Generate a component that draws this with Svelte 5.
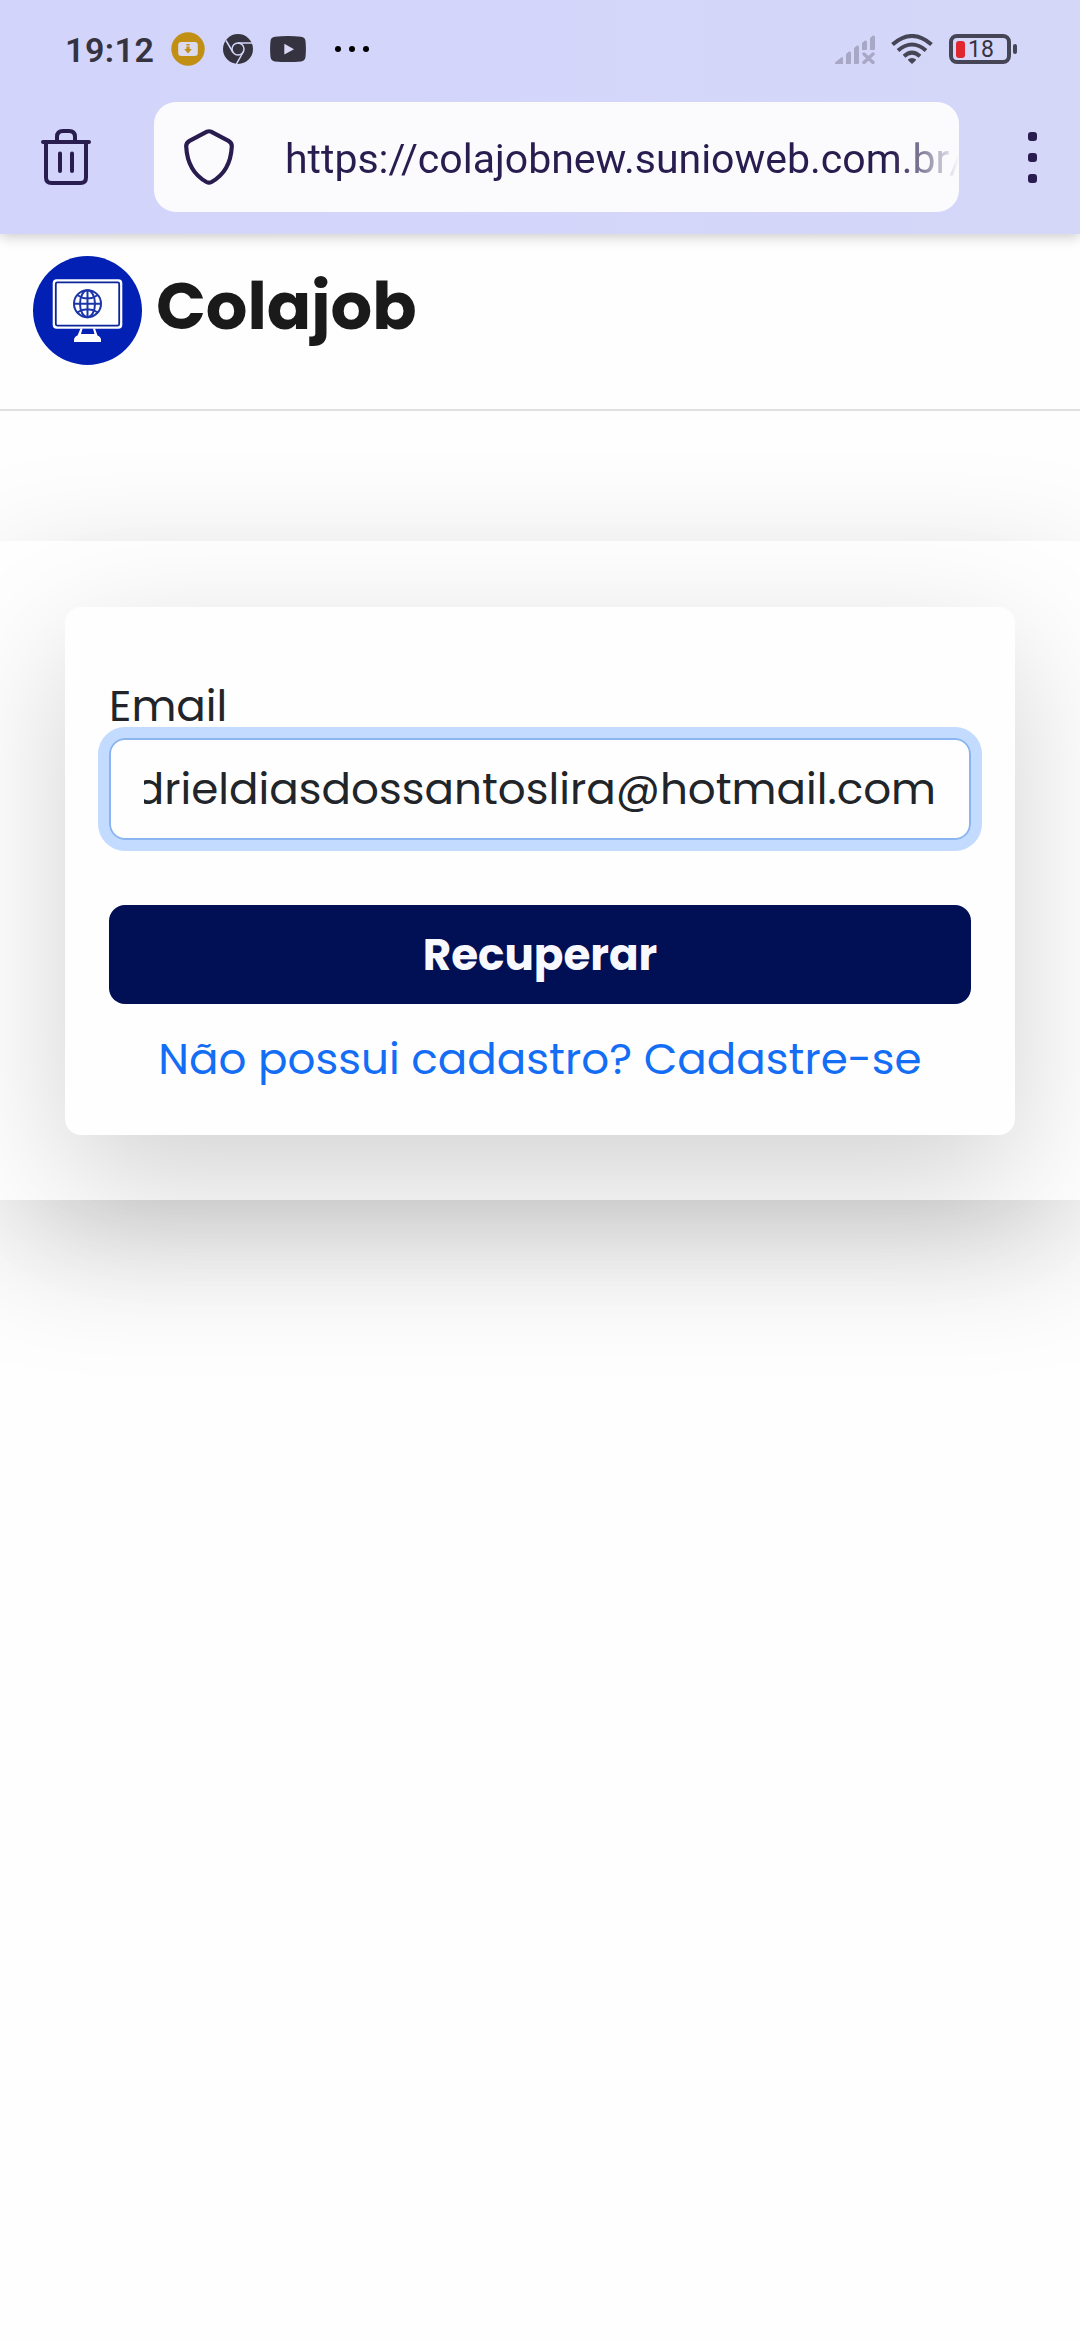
<script>
  const bars = [
    { x: 11, top: 16 },
    { x: 19, top: 10 },
  ];
  const email = 'drieldiasdossantoslira@hotmail.com';
</script>

<div class="screen">
  <div class="chrome">
    <div class="status">
      <div class="status-left">
        <span class="time">19:12</span>
        <svg class="i-dl" width="34" height="34" viewBox="0 0 34 34">
          <circle cx="17" cy="17" r="16.7" fill="#c18f13" />
          <rect x="7.2" y="10" width="19.6" height="14" rx="3" fill="#dcdaf0" />
          <path d="M15.4 12h3.2v1.6h-3.2zM15.4 14.5h3.2v2.5h2.2L17 21.4 13.200 17h2.200z" fill="#c18f13" />
        </svg>
        <svg class="i-chrome" width="30" height="30" viewBox="0 0 30 30">
          <circle cx="15" cy="15" r="15" fill="#34333f" />
          <g fill="none" stroke="#d4d5fa" stroke-width="1.500">
            <circle cx="15" cy="15" r="6" />
            <path d="M15 9H29M9.800 18L3 6.500M20.200 18L13.400 30" />
          </g>
        </svg>
        <svg class="i-yt" width="36" height="26" viewBox="0 0 36 26">
          <path d="M5 .7Q18-.5 31 .7Q35 1 35.500 5Q36.300 13 35.500 21Q35 25 31 25.400Q18 26.500 5 25.400Q1 25 .5 21Q-.3 13 .5 5Q1 1 5 .7Z" fill="#34333f" />
          <path d="M14.300 7.800V18.600L24 13.200Z" fill="#d9d9f6" />
        </svg>
        <svg class="i-dots" width="34" height="6" viewBox="0 0 34 6">
          <circle cx="3" cy="3" r="3" /><circle cx="17" cy="3" r="3" /><circle cx="31" cy="3" r="3" />
        </svg>
      </div>
      <div class="status-right">
        <svg width="40" height="29" viewBox="0 0 40 29" fill="#a8a8c6">
          <path d="M0 29V27.500L6.500 22.200Q8 21.500 8 23.500V29Z" />
          {#each bars as b}
            <path d={`M${b.x} 29V${b.top + 3}L${b.x + 3} ${b.top + .5}Q${b.x + 5} ${b.top} ${b.x + 5} ${b.top + 2}V28Q${b.x + 5} 29 ${b.x + 4} 29Z`} />
          {/each}
          <path d="M27 15V8L30 5.500Q32 5 32 7V14Q32 15 31 15ZM35 15V3L38 .5Q40 0 40 2V14Q40 15 39 15Z" />
          <path d="M29 19L38 27.500M38 19L29 27.500" stroke="#a8a8c6" stroke-width="3.400" stroke-linecap="round" />
        </svg>
        <svg class="i-wifi" width="42" height="30" viewBox="0 0 42 30" fill="none" stroke="#454555" stroke-width="4">
          <path d="M1.500 10.500Q21-6.500 40.500 10.500M7 16.500Q21 4.500 35 16.500M13 22.300Q21 15 29 22.300" />
          <path d="M21 24q2.700 0 4 1.600q.3 1-4 4.400q-4.300-3.400-4-4.400Q18.300 24 21 24z" fill="#454555" stroke="none" />
        </svg>
        <div class="battery">
          <span class="level"></span><span class="pct">18</span>
        </div>
        <span class="nub"></span>
      </div>
    </div>

    <div class="toolbar">
      <svg class="trash" width="50" height="56" viewBox="0 0 50 56" fill="none" stroke="#291d4f" stroke-width="4" stroke-linecap="round">
        <path d="M2 13H48M5 14V48.500Q5 54 10.500 54H39.500Q45 54 45 48.500V14M16 12V8Q16 2 22 2H28Q34 2 34 8V12M19 24.500V42M31 24.500V42" />
      </svg>
      <div class="url">
        <svg width="50" height="56" viewBox="0 0 50 56" fill="none" stroke="#291d4f" stroke-width="4.200" stroke-linejoin="round">
          <path d="M23 2.700Q25 1.800 27 2.700L44.500 11.900Q48 14 47.800 17.500Q46.500 42.500 27.500 53Q25 54.300 22.500 53Q3.500 42.500 2.200 17.500Q2 14 5.500 11.900Z" />
        </svg>
        <span class="address">https://colajobnew.sunioweb.com.br/</span>
      </div>
      <svg class="menu" width="9" height="51" viewBox="0 0 9 51" fill="#291d4f">
        <rect width="9" height="9" rx="3" /><rect y="21" width="9" height="9" rx="3" /><rect y="42" width="9" height="9" rx="3" />
      </svg>
    </div>
  </div>

  <header class="brand">
    <svg class="logo" width="109" height="109" viewBox="0 0 109 109">
      <circle cx="54.500" cy="54.500" r="54.500" fill="#0220b4" />
      <rect x="19.700" y="23.300" width="69.600" height="49.400" rx="4" fill="#fff" />
      <rect x="22.800" y="26.400" width="63.400" height="43.200" rx="1.500" fill="#fff" stroke="#0b2499" stroke-width="1.800" />
      <g fill="none" stroke="#1c35a8" stroke-width="2">
        <circle cx="54.500" cy="47.700" r="13.500" />
        <ellipse cx="54.500" cy="47.700" rx="7.500" ry="13.500" />
        <path d="M54.500 34V61.500M41 47.700H68M44 39Q54.500 46 65 39M44 56.500Q54.500 50 65 56.500" />
      </g>
      <path d="M47.500 72.500H62L64.500 79.500Q68 81 68 84V86H41V84Q41 81 44.500 79.500Z" fill="#fff" />
      <path d="M49.500 72.700H60L61.500 78H48Z" fill="#0220b4" />
    </svg>
    <span class="name">Colajob</span>
  </header>

  <main class="section">
    <form class="card" onsubmit={(e) => e.preventDefault()}>
      <div class="label">Email</div>
      <div class="field"><div class="clip"><span>{email}</span></div></div>
      <button class="submit" type="submit"><span>Recuperar</span></button>
      <a class="link" href="#cadastro"><span>Não possui cadastro? Cadastre-se</span></a>
    </form>
  </main>
</div>

<style>
  :global(body) { margin: 0; background: #fefefe; }
  .screen {
    width: 1080px; height: 2340px; overflow: hidden;
    display: flex; flex-direction: column;
    background: #fefefe; color: #212529;
    font-family: Poppins, Inter, "Liberation Sans", sans-serif;
  }
  .screen * { box-sizing: border-box; }
  svg { display: block; flex: none; }

  .chrome {
    height: 234px; flex: none; display: flex; flex-direction: column;
    background: linear-gradient(90deg, #d3d4fb, #d5d7f9);
    box-shadow: 0 3px 12px rgba(0, 0, 0, .2);
    font-family: Roboto, sans-serif;
  }
  .status { height: 98px; padding: 0 63px 0 65px; display: flex; align-items: center; justify-content: space-between; }
  .status-left, .status-right { display: flex; align-items: center; }
  .time { width: 106px; font-size: 34px; font-weight: 600; line-height: 40px; letter-spacing: .5px; color: #34333f; padding-top: 1px; }
  .i-chrome { margin-left: 18px; }
  .i-yt { margin-left: 17px; }
  .i-dots { margin-left: 29px; }
  .i-wifi { margin-left: 16px; }
  .battery {
    width: 62px; height: 30px; margin-left: 16px; padding-left: 3px;
    display: flex; align-items: center; gap: 3px;
    border: 4px solid #454555; border-radius: 8px;
  }
  .level { width: 9px; height: 17px; border-radius: 3px; background: #e0262f; }
  .pct { font-size: 23px; line-height: 24px; color: #34333f; padding-top: 2px; }
  .nub { width: 4px; height: 10px; margin-left: 2px; border-radius: 2px; background: #454555; }

  .toolbar { height: 118px; padding: 0 43px 0 41px; display: flex; align-items: center; justify-content: space-between; }
  .url {
    width: 805px; height: 110px; margin: 0 6px 0 0; padding-left: 30px;
    display: flex; align-items: center; overflow: hidden;
    background: #fbfbfe; border-radius: 22px;
  }
  .address {
    flex: 1; margin-left: 51px; padding-top: 3px; overflow: hidden; white-space: nowrap;
    font-size: 41px; line-height: 56px; color: #291d4f;
    -webkit-mask-image: linear-gradient(90deg, #000 calc(100% - 66px), transparent);
    mask-image: linear-gradient(90deg, #000 calc(100% - 66px), transparent);
  }

  .brand {
    height: 177px; flex: none; padding: 22px 33px 0; display: flex; align-items: flex-start;
    border-bottom: 2px solid #dfe0df;
  }
  .name { margin: 10px 0 0 14px; font-size: 65.45px; line-height: 80px; font-weight: 700; color: #1a1a1a; }

  .section {
    height: 659px; flex: none; margin-top: 130px; padding: 66px 65px 65px;
    background: #fefefe; box-shadow: 0 43.6px 131px rgba(0, 0, 0, .175);
  }
  .card {
    height: 528px; padding: 66px 44px 0; display: flex; flex-direction: column;
    background: #fefefe; border-radius: 16px; box-shadow: 0 43.6px 131px rgba(0, 0, 0, .175);
    font-size: 43.636px; line-height: 65px;
  }
  .label { height: 65px; }
  .field {
    height: 102px; flex: none; padding: 0 33px 2px; display: flex; align-items: center;
    border: 2px solid #8ab5f1; border-radius: 16px; box-shadow: 0 0 0 11px #c3dbfe;
  }
  .clip { width: 100%; overflow: hidden; display: flex; justify-content: flex-end; white-space: nowrap; }
  .submit {
    height: 99px; flex: none; margin-top: 65px; padding: 0; border: 0; border-radius: 16px;
    background: #010f54; color: #f8f8ff; font: inherit; font-weight: 700;
  }
  .link { height: 65px; margin-top: 22px; text-align: center; color: #146ef5; text-decoration: none; white-space: nowrap; }
</style>
